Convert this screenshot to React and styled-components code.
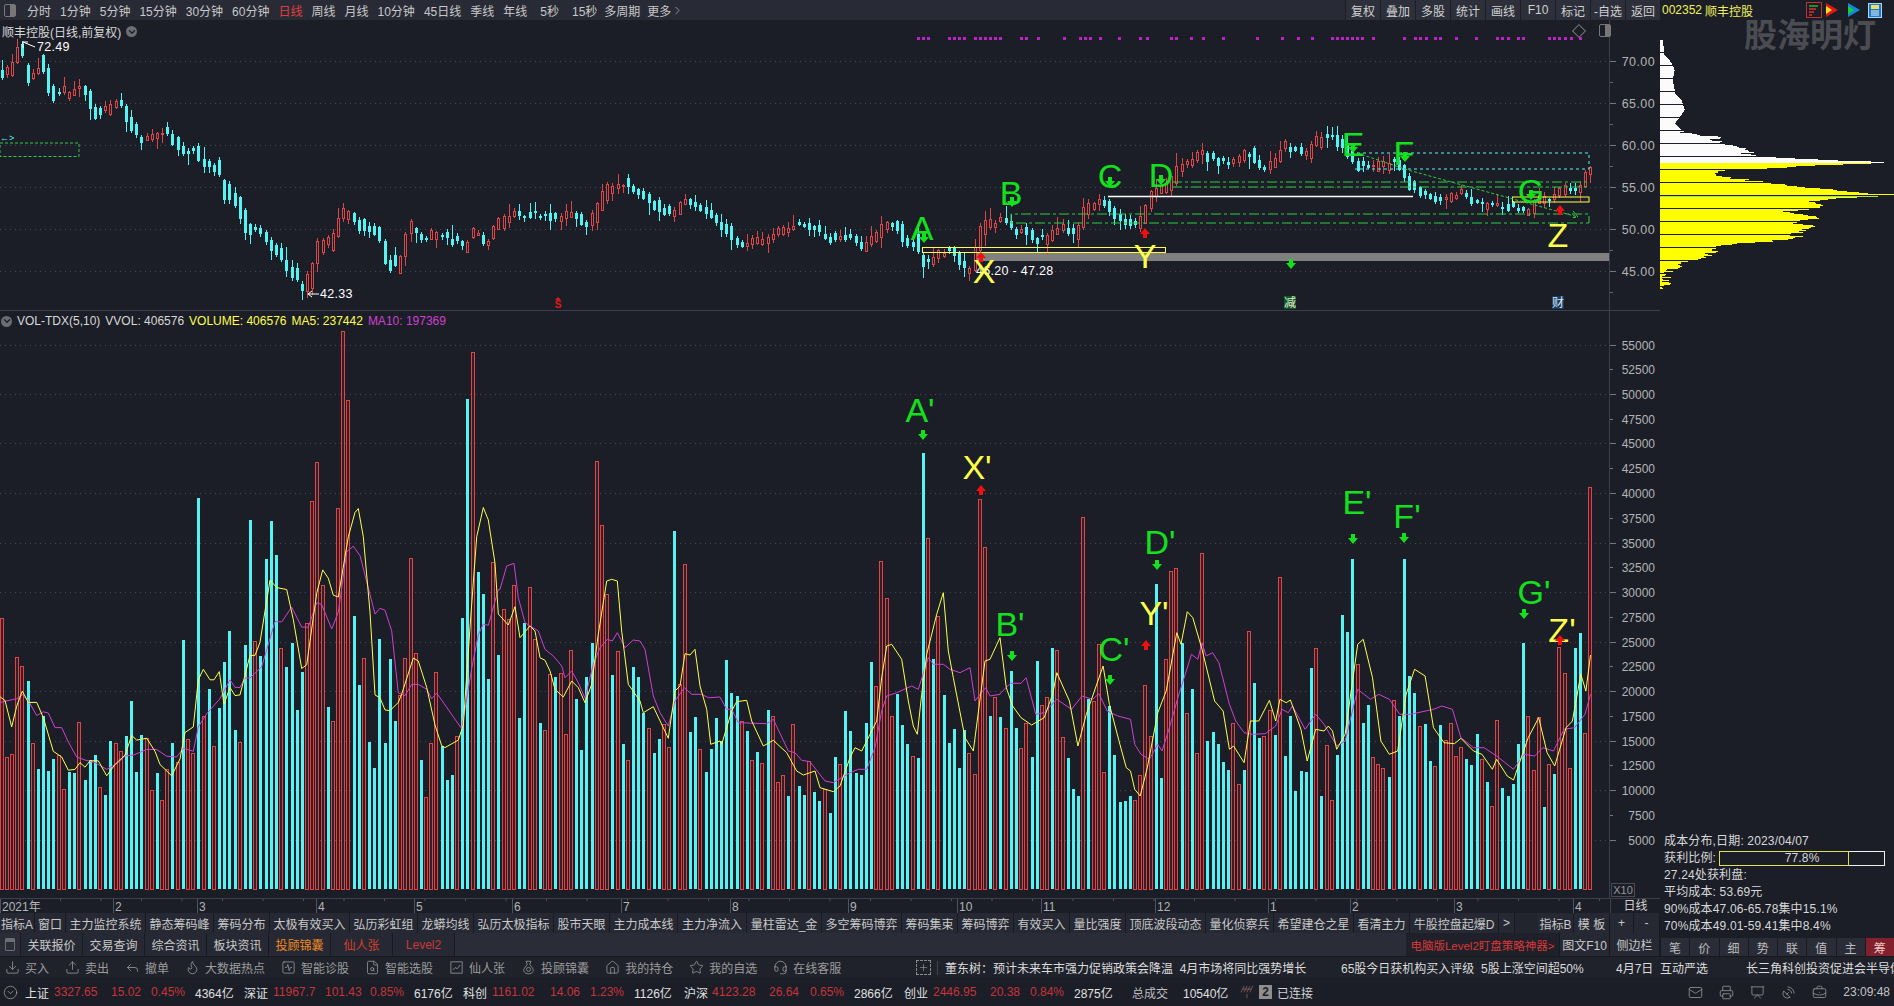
import React from "react";
import styled, { createGlobalStyle } from "styled-components";
import {
	Download,
	Upload,
	Reply,
	Flame,
	SquareActivity,
	FileSearch,
	Star,
	Headset,
	CircleChevronDown,
	Antenna,
	Mail,
	Printer,
	Presentation,
	SatelliteDish,
	BriefcaseBusiness,
	Plus,
	ChevronRight,
	ChevronDown,
	House,
} from "lucide-react";

const BG = "#1b1e27";
const BAR = "#282b36";
const CYAN = "#54f4f4";
const RED = "#dc4646";
const YELLOW = "#ffff4a";
const MAGENTA = "#d040d0";
const GREEN = "#14e01e";
const GRID = "#454852";
const LINE = "#3d404c";
const QUOTE = "#c5343a";

/* ---------- volume data, read off the chart ---------- */

const parseBars = (s, y0, scale) =>
	s
		.trim()
		.split(/\s+/)
		.map((t) => ({ up: t[0] === "r", top: y0 + Number(t.slice(1)) / scale }));

const volBars = [
	...parseBars(
		`r817 r1186 r1176 r918 r944 c982 r1149 c1217 c1076 c1223 c1191 r1180 r1270 c1225 c1228 r1093 c1245 c1192 c1180 r1266
		c1286 c1143 r1148 r1168 c1129 c1037 c1225 c1127 r1135 r1273 c1228 r1298 r1218 c1148 r1198 c875 r1136 r1175 c497 r1077
		c1005 r1157 c1055 c933 c851 c1114 r1145 c888 c555 r878 c917 c659 c559 c649 r896 c946 c882 c1060 c959 r830
		r506 r402 r727 c1052 r1090 r524 r53 r237 c811 c994 r923 c1145 c1215 c872 c1148 c925 c1090 r1020 r922 r655
		r910 c1193 r1290 r1148 r960 c1157 c1246 c1233 r1128 c816 c234 r110 c694 c752 c978 r667 c914`,
		310,
		2.657
	),
	...parseBars(
		`r625 r655 r553 c951 c666 r559 r715 c966 r988 r820 c828 r817 r1000 r748 c894 c1047 c828 c726 r181 r373
		r580 c822 r751 c1029 r1077 c798 c828 c935 r981 c1056 c1014 r970 r1039 c390 r850 r490 c993 c948 r1045 c1113
		c1044 c951 c1020 c777 c876 c885 r960 c990 r1078 c1053 r1087 c927 r946 r1144 r1122 c1185 r970 c1155 c1182 r1080
		c1173 c1200 r1165 c1236 c1068 r1090 c930 c990 c1115 c1122 c966 c783 r856 r481 r592 r945 c880 c972 c1030 r1066
		c1071 c156 r411 c773 r646 c882 c1026 c984 c1101 c988 r1057 r1120 r294 r438 c945 r888`,
		400,
		3
	),
	...parseBars(
		`c948 r982 c810 c982 r1042 r966 c1068 c780 r912 r888 c742 r748 r1008 c1072 c1164 c1185 r349 c895 r900 r730
		r1113 c915 c1062 c1203 c1200 c1185 r1197 r1122 r853 r1005 c549 c1132 r775 r511 r502 c725 r935 c865 r1057 r457
		c1020 c993 c1030 c1083 c1107 r967 r1150 c1107 r690 c846 c1010 r1005 r928 c1002 r529 c1065 c945 c1170 c1110 c1113
		c801 r740 c1185 r1033 r1197 c1062 c642 c693 c475 r790 c966 c912 r1068 r1090 r1102 c1128 r898 c945 c475 c825
		c876 r975 c969 c1080 r1095 c972 r1017 r966 r1065 r1038 c1074 c1092 c999 r1074 c1143 r1215 r957 c1161 c1185 c1149
		c1029 c726 r945 r1107 r948 c1218 r1090 c1119 r738 r816 r1101 c741 c696 r996 r258`,
		400,
		3
	),
];

const barX = (i) => 1.7 + 5.175 * i;

const toPoints = (pairs, ox, oy, sx, sy) => {
	const out = [];
	for (let i = 0; i < pairs.length; i += 2) out.push([ox + pairs[i] / sx, oy + pairs[i + 1] / sy]);
	return out;
};

const ma5 = [
	...toPoints(
		[0,1025,15,1035,35,1105,50,1050,67,1010,85,1040,110,1040,130,1080,160,1170,185,1185,205,1220,225,1218,240,1200,255,1212,270,1195,295,1195,320,1235,345,1205,375,1180,395,1128,410,1140,440,1135,465,1170,480,1205,515,1235,540,1190,555,1120,580,1105,595,980,610,952,630,980,642,980,658,958,672,1045,690,1000,705,1022,720,1020,750,915,765,915,780,880,810,715,830,735,860,740,880,820,905,950,920,940,950,750,968,688,985,710,1000,755,1015,760,1045,600,1065,535,1075,525,1090,600,1110,800,1125,1020,1140,1028,1155,1060,1170,1062,1195,1040,1205,1018,1240,922,1255,930,1280,1000,1305,1100,1325,1155,1335,1160,1375,1140,1390,1100,1410,840,1430,600,1450,522,1465,555,1485,670,1495,805],
		0, 310, 3, 2.657
	),
	...toPoints(
		[25,672,45,617,60,710,90,675,105,690,120,770,135,778,150,810,165,865,190,888,215,840,235,860,255,905,275,850,295,700,320,540,335,535,352,540,365,690,385,850,420,900,430,935,460,917,505,1012,525,870,540,855,555,758,570,762,585,745,600,855,620,925,632,1030,660,1020,665,1030,695,930,710,902,740,898,755,960,790,1035,820,1018,860,1055,890,1110,910,1122,945,1110,960,1160,1000,1172,1020,1155,1050,1070,1065,1040,1085,1050,1130,960,1145,830,1160,735,1175,730,1205,775,1225,900,1240,975,1252,1000,1265,880,1280,760,1310,640,1330,575,1345,750,1360,830,1395,1010,1420,1050,1455,780,1470,775,1500,710],
		500, 400, 3, 3
	),
	...toPoints(
		[15,860,30,915,50,950,75,972,105,950,125,880,135,815,165,900,185,1035,205,940,245,795,260,910,285,1030,300,1100,310,1110,320,1165,333,1185,350,1100,375,935,395,870,420,695,430,730,445,632,458,650,480,745,510,900,530,930,545,1045,555,1035,580,1085,595,960,615,960,640,898,655,960,665,895,680,905,690,897,715,985,730,1080,750,985,770,990,780,975,790,990,800,1045,820,1000,850,730,863,715,885,830,905,1020,925,1060,945,1050,965,880,985,805,1010,825,1030,980,1055,1025,1080,1028,1095,1012,1125,1050,1145,1060,1170,1105,1180,1075,1205,1125,1220,1137,1255,1010,1280,950,1300,1055,1318,1095,1345,980,1360,960,1380,820,1392,870,1403,762],
		1000, 400, 2.376, 3
	),
];

const ma10 = [
	...toPoints(
		[0,1040,50,1030,67,1020,85,1035,110,1075,130,1065,145,1068,165,1107,185,1107,205,1145,230,1185,255,1193,285,1200,320,1218,355,1200,375,1182,400,1180,440,1165,470,1165,500,1183,530,1185,550,1162,580,1170,595,1105,620,1070,660,1030,690,980,705,1000,720,1000,735,975,750,975,785,945,825,825,845,826,875,787,905,840,925,840,950,775,965,780,995,845,1015,800,1040,640,1060,625,1080,650,1125,805,1140,790,1155,795,1175,850,1195,1015,1215,1022,1235,992,1255,992,1280,1005,1295,1030,1310,1015,1385,1110,1415,950,1435,860,1450,832,1465,835,1495,740],
		0, 310, 3, 2.657
	),
	...toPoints(
		[0,565,20,495,42,487,55,590,75,665,115,690,135,745,160,765,185,795,195,830,215,810,235,845,255,892,280,790,300,740,322,715,337,720,352,695,375,740,400,717,420,720,435,745,460,885,480,935,505,975,525,900,553,860,575,880,605,880,625,890,660,888,680,925,695,925,715,965,800,968,820,955,865,1050,885,1055,905,1078,930,1082,975,1140,1000,1145,1050,1115,1075,1105,1100,1105,1125,1040,1145,930,1160,885,1190,875,1235,855,1255,865,1285,770,1300,790,1330,790,1350,805,1380,815,1410,800,1425,900,1440,880,1457,860,1470,885,1500,880],
		500, 400, 3, 3
	),
	...toPoints(
		[0,878,25,847,50,847,62,830,85,940,105,935,135,895,170,925,195,885,220,895,235,878,255,930,280,945,310,955,320,1030,335,1060,355,1075,375,1030,385,1050,400,990,425,880,455,760,470,775,480,725,490,765,505,755,520,785,545,910,560,960,580,995,600,1000,630,998,655,975,670,925,685,935,695,915,725,985,750,940,770,970,800,1035,820,1020,850,865,880,895,900,880,925,895,950,940,975,940,1030,925,1050,915,1075,925,1095,1010,1125,1040,1150,1040,1180,1065,1220,1105,1245,1060,1270,1065,1290,1040,1315,1050,1340,985,1365,980,1390,940,1403,880],
		1000, 400, 2.376, 3
	),
];

/* ---------- price data: traced mid line, candles scattered round it ---------- */

const priceTrace = [
	...toPoints(
		[0,130,20,130,30,70,45,65,50,130,60,130,75,100,85,155,100,205,115,185,130,190,145,175,160,205,170,250,190,240,215,225,235,280,250,320,270,315,295,300,310,335,330,375,345,360,365,400,390,420,400,480,415,500,430,530,445,610,460,600,480,640,500,680,520,720,540,770,555,740,570,640,590,640,610,560,630,560,650,590,675,610,695,700,715,700,730,600,750,620,790,610,830,650,850,600,870,640,890,580,920,550,950,550,975,555,1000,570,1020,550,1050,590,1065,550,1085,470,1115,460,1135,480,1165,520,1200,555,1220,510,1240,520,1270,560,1295,590,1315,640,1350,630,1375,625,1395,600,1420,590,1440,590,1465,610,1490,630,1510,620,1540,650],
		0, 30, 1.782, 3
	),
	...toPoints(
		[0,310,15,280,35,280,50,310,60,335,85,340,95,400,115,385,130,370,150,360,170,385,190,420,205,400,220,320,235,280,260,270,285,280,300,310,320,290,345,330,375,320,400,295,432,310,445,250,470,220,490,210,510,260,545,270,565,290,580,230,600,190,630,170,650,110,680,100,700,70,735,90,770,100,810,70,825,110,860,100,880,50,910,60,930,80,950,30,970,25,1000,30,1020,70,1040,100,1075,115,1110,100,1130,100,1150,155,1180,185,1225,205,1270,190,1300,215,1340,220,1380,230,1410,240,1440,205,1470,205,1500,165,1520,185,1547,130],
		880, 130, 2.178, 3
	),
];

const interp = (pts, x) => {
	if (x <= pts[0][0]) return pts[0][1];
	for (let i = 1; i < pts.length; i++) {
		if (x <= pts[i][0]) {
			const [x0, y0] = pts[i - 1];
			const [x1, y1] = pts[i];
			return y0 + ((y1 - y0) * (x - x0)) / (x1 - x0 || 1);
		}
	}
	return pts[pts.length - 1][1];
};

const rng = (seed) => () => {
	seed = (seed + 0x6d2b79f5) | 0;
	let t = Math.imul(seed ^ (seed >>> 15), 1 | seed);
	t = (t + Math.imul(t ^ (t >>> 7), 61 | t)) ^ t;
	return ((t ^ (t >>> 14)) >>> 0) / 4294967296;
};

const candles = (() => {
	const r = rng(2352);
	const list = [];
	for (let i = 0; i < 308; i++) {
		const x = Math.round(barX(i));
		const mid = interp(priceTrace, x) + (r() - 0.5) * 7;
		const slope = interp(priceTrace, x + 6) - interp(priceTrace, x - 6);
		const body = 1 + r() * r() * 9 + Math.abs(slope) * 0.6;
		const up = slope + (r() - 0.5) * 6 < 0;
		const y = mid - body / 2;
		list.push({
			x,
			y: Math.round(y),
			h: Math.max(1, Math.round(body)),
			hi: Math.round(y - r() * r() * 13 - 1),
			lo: Math.round(y + body + r() * r() * 13 + 1),
			up,
		});
	}
	return list;
})();

const purpleDots = [
	917, 922, 927, 948, 953, 958, 963, 974, 979, 984, 989, 994, 999, 1020, 1025, 1037, 1063, 1079, 1084, 1089, 1099, 1118,
	1139, 1146, 1170, 1175, 1190, 1202, 1222, 1256, 1281, 1297, 1311, 1331, 1336, 1341, 1346, 1351, 1356, 1361, 1372,
	1403, 1414, 1419, 1425, 1434, 1439, 1455, 1475, 1496, 1501, 1507, 1517, 1522, 1548, 1553, 1558, 1564, 1570, 1579,
];

/* ---------- chip distribution: [y, width] ---------- */

const chipWidths = toPoints(
	[10,28,10,40,12,75,25,85,35,100,44,120,38,150,46,190,65,210,74,240,60,260,45,280,65,300,85,310,165,320,170,335,200,345,275,355,260,370,320,380,405,385,565,392,675,397,650,400,500,405,410,410,345,415,190,420,160,430,195,440,260,450,330,460,420,470,520,480,620,490,690,493,690,498,540,505,440,515,490,525,480,535,370,545,460,555,485,565,395,575,460,590,430,600,400,610,425,625,320,635,190,645,180,655,150,670,130,680,110,690,75,700,35,720,15,730,15,750,18,765,2,775],
	0, 0, 1, 1
).map(([w, zy]) => [30 + zy / 3, w / 3]);

const chipRows = (() => {
	const r = rng(77);
	const rows = [];
	for (let y = 39; y < 289; y++) {
		if ((y - 39) % 13 === 0) continue;
		const base = interp(chipWidths, y + 0.5);
		const jitter = y > 130 ? (r() - 0.5) * 14 : 0;
		rows.push({ y, w: Math.max(2, base + jitter) });
	}
	return rows;
})();

/* ---------- text content ---------- */

const periods = [
	["分时", 9], ["1分钟", 9], ["5分钟", 9], ["15分钟", 9], ["30分钟", 9], ["60分钟", 9], ["日线", 9], ["周线", 9], ["月线", 9],
	["10分钟", 9], ["45日线", 9], ["季线", 9], ["年线", 13], ["5秒", 13], ["15秒", 7], ["多周期", 7],
];
const rightTools = ["复权", "叠加", "多股", "统计", "画线", "F10", "标记", "-自选", "返回"];

const indexTabs = [
	["指标A", 35], ["窗口", 31], ["主力监控系统", 80], ["静态筹码峰", 68], ["筹码分布", 56], ["太极有效买入", 80],
	["弘历彩虹组", 68], ["龙蟒均线", 56], ["弘历太极指标", 80], ["股市天眼", 56], ["主力成本线", 68], ["主力净流入", 69],
	["量柱雷达_金", 75], ["多空筹码博弈", 80], ["筹码集束", 56], ["筹码博弈", 56], ["有效买入", 56], ["量比强度", 56],
	["顶底波段动态", 80], ["量化侦察兵", 68], ["希望建仓之星", 80], ["看清主力", 56], ["牛股控盘起爆D", 89],
];

const infoTabs = [
	["关联报价", ""], ["交易查询", ""], ["综合资讯", ""], ["板块资讯", ""], ["投顾锦囊", "#f08a24"], ["仙人张", "#d8402a"], ["Level2", "#c83a3a"],
];

const ChartBox = (p) => (
	<svg width={15} height={15} viewBox="0 0 24 24" fill="none" stroke="currentColor" strokeWidth="1.3" {...p}>
		<rect x="3" y="3" width="18" height="18" />
		<path d="M6 16l4-4 3 2 5-6" />
	</svg>
);

const PouchIcon = (p) => (
	<svg width={15} height={15} viewBox="0 0 24 24" fill="none" stroke="currentColor" strokeWidth="1.3" {...p}>
		<path d="M8 2h8l-2 5 5 7c2 4-1 8-7 8s-9-4-7-8l5-7z" />
		<circle cx="12" cy="15" r="3.2" />
	</svg>
);

const actions = [
	[Download, "买入"], [Upload, "卖出"], [Reply, "撤单"], [Flame, "大数据热点"], [SquareActivity, "智能诊股"], [FileSearch, "智能选股"],
	[ChartBox, "仙人张"], [PouchIcon, "投顾锦囊"], [House, "我的持仓"], [Star, "我的自选"], [Headset, "在线客服"],
];

const news = [
	["董东树：预计未来车市强力促销政策会降温  4月市场将同比强势增长", 396],
	["65股今日获机构买入评级  5股上涨空间超50%", 275],
	["4月7日  互动严选", 130],
	["长三角科创投资促进会半导体", 148],
];

const quoteRow = [
	["上证", "w", 29], ["3327.65", "r", 57], ["15.02", "r", 40], ["0.45%", "r", 44], ["4364亿", "w", 49],
	["深证", "w", 29], ["11967.7", "r", 52], ["101.43", "r", 45], ["0.85%", "r", 44], ["6176亿", "w", 49],
	["科创", "w", 29], ["1161.02", "r", 58], ["14.06", "r", 40], ["1.23%", "r", 44], ["1126亿", "w", 50],
	["沪深", "w", 28], ["4123.28", "r", 57], ["26.64", "r", 41], ["0.65%", "r", 44], ["2866亿", "w", 50],
	["创业", "w", 29], ["2446.95", "r", 57], ["20.38", "r", 40], ["0.84%", "r", 44], ["2875亿", "w", 58],
	["总成交", "g", 51], ["10540亿", "w", 57],
];

const chipInfo = ["27.24处获利盘:", "平均成本: 53.69元", "90%成本47.06-65.78集中15.1%", "70%成本49.01-59.41集中8.4%"];
const sideTabs = ["笔", "价", "细", "势", "联", "值", "主", "筹"];

const months = [[2, "2021年"], [115, "2"], [199, "3"], [318, "4"], [416, "5"], [514, "6"], [623, "7"], [732, "8"], [850, "9"], [959, "10"], [1043, "11"], [1157, "12"], [1270, "1"], [1352, "2"], [1456, "3"], [1575, "4"]];

const priceY = (p) => 271 - (p - 45) * 8.38;
const volY = (v) => 888 - v * 0.0099;

const polyline = (pts) => pts.map(([x, y]) => `${x.toFixed(1)},${y.toFixed(1)}`).join(" ");

/* ---------- chart drawings ---------- */

const ArrowDown = ({ x, y, color = GREEN }) => (
	<path d={`M${x - 2} ${y - 5}h4v4h3l-5 6l-5 -6h3z`} fill={color} />
);
const ArrowUp = ({ x, y, color = "#f01010" }) => (
	<path d={`M${x} ${y - 5}l5 6h-3v4h-4v-4h-3z`} fill={color} />
);
const Big = ({ x, y, color = GREEN, children }) => (
	<text x={x} y={y} fill={color} fontSize="34" textAnchor="middle" fontFamily="Liberation Sans">
		{children}
	</text>
);

const PriceChart = () => (
	<svg width="1660" height="290" viewBox="0 20 1660 290" style={{ display: "block" }}>
		{[70, 65, 60, 55, 50, 45].map((p) => (
			<g key={p}>
				<line x1="0" x2="1609" y1={Math.round(priceY(p)) + 0.5} y2={Math.round(priceY(p)) + 0.5} stroke={GRID} strokeDasharray="1 4" />
				<line x1="1610" x2="1616" y1={Math.round(priceY(p)) + 0.5} y2={Math.round(priceY(p)) + 0.5} stroke="#777" />
				<line x1="1610" x2="1613" y1={Math.round(priceY(p - 2.5)) + 0.5} y2={Math.round(priceY(p - 2.5)) + 0.5} stroke="#666" />
				<text x="1655" y={priceY(p) + 4.5} fill="#b4b4b4" fontSize="12.5" textAnchor="end" letterSpacing="0.4">
					{p}.00
				</text>
			</g>
		))}
		<line x1="1609.5" x2="1609.5" y1="20" y2="310" stroke={LINE} />

		{purpleDots.map((x) => (
			<rect key={x} x={x} y="37" width="3" height="3" fill="#c020c8" />
		))}

		<rect x="0" y="143" width="79" height="13.5" fill="none" stroke="#2ecc40" strokeDasharray="3 2" />
		<text x="0" y="141" fill={CYAN} fontSize="9">
			←&gt;
		</text>

		<rect x="975" y="253" width="634" height="8" fill="#808080" />

		<g shapeRendering="crispEdges">
			{candles.map((c, i) => (
				<g key={i}>
					<line x1={c.x + 0.5} x2={c.x + 0.5} y1={c.hi} y2={c.lo} stroke={c.up ? RED : CYAN} />
					{c.up ? (
						<rect x={c.x - 0.5} y={c.y + 0.5} width="2" height={c.h} fill={BG} stroke={RED} />
					) : (
						<rect x={c.x - 1} y={c.y} width="3" height={c.h} fill={CYAN} />
					)}
				</g>
			))}
		</g>

		<rect x="922.5" y="247.5" width="243" height="5" fill="none" stroke={YELLOW} />
		<rect x="1512.5" y="197" width="76.5" height="5" fill="none" stroke={YELLOW} />
		<line x1="1108" x2="1413" y1="196.5" y2="196.5" stroke="#fff" strokeWidth="1.5" />

		<path d="M1011 223V214H1589V223Z" fill="none" stroke="#2ecc40" strokeDasharray="10 3 3 3" />
		<path d="M1172 182H1589M1172 187H1589" fill="none" stroke="#2ecc40" strokeDasharray="10 3 3 3" />
		<path d="M1357 153H1589V169H1355" fill="none" stroke={CYAN} strokeDasharray="3 3" />
		<path d="M1357 153L1408 170L1578 217M1573 211L1578 217L1571 218" fill="none" stroke="#2ecc40" strokeDasharray="3 2" />

		<text x="976" y="275" fill="#fff" fontSize="12.5" letterSpacing="0.3">
			46.20 - 47.28
		</text>
		<path d="M23 42L35 47M23 42v6M23 42h5" fill="none" stroke="#fff" />
		<text x="37" y="51" fill="#fff" fontSize="12.5" letterSpacing="0.3">
			72.49
		</text>
		<path d="M308 294H319M308 294l4-3M308 294l4 3" fill="none" stroke="#fff" />
		<text x="320" y="298" fill="#fff" fontSize="12.5" letterSpacing="0.3">
			42.33
		</text>

		<path d="M558 297l3 3h-6z" fill="#e01818" />
		<text x="558" y="308" fill="#e01818" fontSize="10" fontWeight="bold" textAnchor="middle">
			S
		</text>
		<rect x="1284" y="296" width="12" height="13" fill="#0b5a18" />
		<text x="1290" y="307" fill="#e8e8e8" fontSize="12" textAnchor="middle">
			减
		</text>
		<rect x="1552" y="296" width="12" height="13" fill="#123a66" />
		<text x="1558" y="307" fill="#e8e8e8" fontSize="12" textAnchor="middle">
			财
		</text>

		<Big x={922} y={240}>A</Big>
		<Big x={1011} y={205}>B</Big>
		<Big x={1110} y={188}>C</Big>
		<Big x={1161} y={187}>D</Big>
		<Big x={1353} y={156}>E</Big>
		<Big x={1404} y={165}>F</Big>
		<Big x={1531} y={203}>G</Big>
		<Big x={984} y={283} color={YELLOW}>X</Big>
		<Big x={1145} y={268} color={YELLOW}>Y</Big>
		<Big x={1558} y={247} color={YELLOW}>Z</Big>

		{[[924, 238], [1012, 202], [1110, 182], [1161, 180], [1353, 148], [1405, 157], [1531, 195], [1291, 264]].map(([x, y]) => (
			<ArrowDown key={x} x={x} y={y} />
		))}
		<ArrowUp x={981} y={257} />
		<ArrowUp x={1145} y={233} />
		<ArrowUp x={1560} y={210} />
	</svg>
);

const VolumeChart = () => {
	const ticks = [];
	for (let v = 5000; v <= 55000; v += 2500) ticks.push(v);
	return (
		<svg width="1660" height="588" viewBox="0 310 1660 588" style={{ display: "block" }}>
			{ticks.map((v) => {
				const y = Math.round(volY(v)) + 0.5;
				const major = v % 5000 === 0;
				return (
					<g key={v}>
						{major && <line x1="0" x2="1609" y1={y} y2={y} stroke={GRID} strokeDasharray="1 4" />}
						<line x1="1610" x2={major ? 1616 : 1613} y1={y} y2={y} stroke="#777" />
						<text x="1655" y={y + 4} fill="#b4b4b4" fontSize="12" textAnchor="end">
							{v}
						</text>
					</g>
				);
			})}
			<line x1="1609.5" x2="1609.5" y1="310" y2="898" stroke={LINE} />

			<g shapeRendering="crispEdges">
				{volBars.map((b, i) => {
					const x = Math.round(barX(i));
					return b.up ? (
						<rect key={i} x={x - 1.5} y={Math.round(b.top) + 0.5} width="3" height={887.5 - Math.round(b.top)} fill="#3a1d24" stroke={RED} />
					) : (
						<rect key={i} x={x - 1.5} y={Math.round(b.top)} width="3.5" height={888 - Math.round(b.top)} fill={CYAN} />
					);
				})}
			</g>

			<polyline points={polyline(ma10)} fill="none" stroke={MAGENTA} strokeWidth="1" />
			<polyline points={polyline(ma5)} fill="none" stroke={YELLOW} strokeWidth="1" />

			<Big x={920} y={421}>A'</Big>
			<Big x={977} y={478} color={YELLOW}>X'</Big>
			<Big x={1010} y={635}>B'</Big>
			<Big x={1114} y={660}>C'</Big>
			<Big x={1154} y={624} color={YELLOW}>Y'</Big>
			<Big x={1160} y={553}>D'</Big>
			<Big x={1357} y={513}>E'</Big>
			<Big x={1407} y={527}>F'</Big>
			<Big x={1534} y={603}>G'</Big>
			<Big x={1562} y={641} color={YELLOW}>Z'</Big>

			{[[923, 434], [1012, 655], [1110, 679], [1157, 564], [1353, 538], [1404, 537], [1524, 613]].map(([x, y]) => (
				<ArrowDown key={x} x={x} y={y} />
			))}
			<ArrowUp x={981} y={489} />
			<ArrowUp x={1146} y={644} />
			<ArrowUp x={1560} y={639} />
		</svg>
	);
};

const TimeAxis = () => (
	<svg width="1610" height="14" viewBox="0 0 1610 14" style={{ display: "block" }}>
		{months.map(([x, label], i) => (
			<g key={i}>
				<line x1={x - 1.5} x2={x - 1.5} y1="0" y2="14" stroke="#50535e" />
				<text x={x} y="12" fill="#b4b4b4" fontSize="12">
					{label}
				</text>
			</g>
		))}
		{Array.from({ length: 40 }, (_, i) => (
			<line key={i} x1={20 + i * 40.5} x2={20 + i * 40.5} y1="0" y2="2" stroke="#50535e" />
		))}
	</svg>
);

const ChipChart = () => (
	<svg width="234" height="290" viewBox="1660 20 234 290" style={{ display: "block" }} shapeRendering="crispEdges">
		{chipRows.map(({ y, w }) => (
			<rect key={y} x="1660" y={y} width={w} height="1" fill={y === 196 ? "#a4e070" : y < 163 ? "#fbfbfb" : "#ffff00"} />
		))}
	</svg>
);

/* ---------- layout ---------- */

const GlobalStyle = createGlobalStyle`
	html, body {
		margin: 0;
		padding: 0;
		background: ${BG};
		overflow: hidden;
	}
	svg text {
		font-family: "Liberation Sans", "Noto Sans CJK SC", sans-serif;
	}
`;

const Page = styled.div`
	width: 1894px;
	height: 1006px;
	display: flex;
	flex-direction: column;
	background: ${BG};
	color: #d2d2d2;
	font-family: "Liberation Sans", "Noto Sans CJK SC", sans-serif;
	font-size: 12px;
	overflow: hidden;
`;

const Upper = styled.div`
	display: flex;
	height: 956px;
`;

const MainColumn = styled.div`
	width: 1660px;
	display: flex;
	flex-direction: column;
`;

const Toolbar = styled.div`
	height: 20px;
	display: flex;
	align-items: center;
	background: ${BAR};
	flex: none;
`;

const PanelToggle = styled.span`
	width: 10px;
	height: 11px;
	margin: 0 11px 0 4px;
	border: 1px solid #777;
	border-radius: 2px;
	background: linear-gradient(to right, transparent 50%, #777 50%);
`;

const Period = styled.span`
	margin-right: ${(p) => p.$gap}px;
	color: ${(p) => (p.$active ? "#e23c3c" : "#c8c8c8")};
	white-space: nowrap;
`;

const MoreLink = styled.span`
	display: flex;
	align-items: center;
	color: #c8c8c8;
`;

const ToolGroup = styled.div`
	margin-left: auto;
	display: flex;
	height: 100%;
`;

const ToolButton = styled.span`
	width: 35px;
	display: flex;
	align-items: center;
	justify-content: center;
	border-left: 1px solid #1b1e27;
	background: #2d303b;
	color: #d0d0d0;
	box-sizing: border-box;
	white-space: nowrap;
`;

const Pane = styled.div`
	position: relative;
	height: ${(p) => p.$h}px;
	flex: none;
	border-top: ${(p) => (p.$rule ? `1px solid ${LINE}` : "none")};
	box-sizing: border-box;
`;

const Legend = styled.div`
	position: absolute;
	top: ${(p) => p.$top}px;
	left: ${(p) => p.$left || 2}px;
	display: flex;
	align-items: center;
	gap: ${(p) => p.$gap || 5}px;
	white-space: nowrap;
`;

const LegendText = styled.span`
	color: ${(p) => p.$color || "#d8d8d8"};
`;

const RoundChevron = styled.span`
	width: 11px;
	height: 11px;
	border-radius: 50%;
	background: #6b6d74;
	color: #1b1e27;
	display: flex;
	align-items: center;
	justify-content: center;
`;

const CornerTools = styled.div`
	position: absolute;
	top: 4px;
	left: 1574px;
	display: flex;
	align-items: center;
	gap: 11px;
`;

const Diamond = styled.span`
	width: 8px;
	height: 8px;
	border: 1px solid #777;
	transform: rotate(45deg);
`;

const ScaleBox = styled.span`
	position: absolute;
	left: 1611px;
	bottom: 1px;
	width: 24px;
	height: 14px;
	border: 1px solid #474a55;
	box-sizing: border-box;
	color: #999;
	font-size: 11px;
	line-height: 12px;
	text-align: center;
`;

const TimeRow = styled.div`
	height: 15px;
	display: flex;
	border-top: 1px solid ${LINE};
	box-sizing: border-box;
	flex: none;
`;

const TimeLabel = styled.span`
	flex: 1;
	text-align: center;
	line-height: 14px;
	border-left: 1px solid ${LINE};
`;

const TabRow = styled.div`
	height: ${(p) => p.$h}px;
	display: flex;
	background: ${(p) => p.$bg || "#22252e"};
	flex: none;
`;

const Tab = styled.span`
	width: ${(p) => p.$w}px;
	flex: none;
	display: flex;
	align-items: center;
	justify-content: center;
	box-sizing: border-box;
	border-right: 1px solid #171a21;
	background: ${(p) => p.$bg || "#262933"};
	color: ${(p) => p.$color || "#c8c8c8"};
	white-space: nowrap;
	overflow: hidden;
`;

const TabFill = styled.span`
	flex: 1;
`;

const PromoTab = styled(Tab)`
	background: #1f2029;
	font-size: 11.5px;
`;

const IconCell = styled.span`
	width: 20px;
	flex: none;
	display: flex;
	align-items: center;
	justify-content: center;
	border-right: 1px solid #171a21;
`;

const TinyPanel = styled.span`
	width: 8px;
	height: 11px;
	border: 1px solid #6c6e74;
	border-radius: 1px;
	background: linear-gradient(to bottom, #6c6e74 30%, transparent 30%);
`;

const ChipPanel = styled.aside`
	position: relative;
	flex: 1;
	display: flex;
	flex-direction: column;
`;

const ChipHeader = styled.div`
	height: 20px;
	display: flex;
	align-items: center;
	padding-left: 2px;
	gap: 3px;
	color: #f0f05c;
	flex: none;
`;

const HeaderIcons = styled.div`
	margin-left: 50px;
	display: flex;
	align-items: center;
	gap: 4px;
`;

const Watermark = styled.div`
	position: absolute;
	top: 11px;
	left: 84px;
	font-family: "Noto Sans CJK SC", sans-serif;
	font-size: 33px;
	font-weight: 700;
	line-height: 44px;
	color: #4b4c52;
	white-space: nowrap;
`;

const ChipInfo = styled.div`
	margin-top: auto;
	padding: 0 0 3px 4px;
	display: flex;
	flex-direction: column;
	color: #d8d8d8;
`;

const InfoRow = styled.div`
	height: 17px;
	line-height: 17px;
	display: flex;
	align-items: center;
	white-space: nowrap;
	letter-spacing: 0.15px;
`;

const ProfitBar = styled.div`
	position: relative;
	margin-left: 3px;
	width: 166px;
	height: 15px;
	border: 1px solid #f0f0f0;
	box-sizing: border-box;
	text-align: center;
	line-height: 13px;
`;

const ProfitFill = styled.div`
	position: absolute;
	left: -1px;
	top: -1px;
	bottom: -1px;
	border: 1px solid #e0e050;
`;

const SideTabs = styled.div`
	height: 18px;
	display: flex;
	flex: none;
`;

const SideTab = styled.span`
	flex: 1;
	display: flex;
	align-items: center;
	justify-content: center;
	background: ${(p) => (p.$active ? "#82202e" : "#2a2d38")};
	border-left: 1px solid #171a21;
	color: ${(p) => (p.$active ? "#f0c8c8" : "#bcbcbc")};
`;

const ActionBar = styled.div`
	height: 22px;
	display: flex;
	align-items: center;
	padding-left: 5px;
	background: #1f222b;
	border-top: 1px solid #15171d;
	box-sizing: border-box;
	white-space: nowrap;
	overflow: hidden;
	flex: none;
`;

const Actions = styled.div`
	width: 911px;
	flex: none;
	display: flex;
	gap: 16px;
`;

const Action = styled.span`
	display: flex;
	align-items: center;
	gap: 5px;
	color: #9c9c9c;
`;

const AddBox = styled.span`
	width: 15px;
	height: 15px;
	flex: none;
	display: flex;
	align-items: center;
	justify-content: center;
	border: 1px dashed #8a8a8a;
	box-sizing: border-box;
	color: #aaa;
`;

const Divider = styled.span`
	width: 1px;
	height: 14px;
	margin: 0 7px 0 6px;
	background: #41444f;
	flex: none;
`;

const NewsItem = styled.span`
	width: ${(p) => p.$w}px;
	flex: none;
	color: #dcdcdc;
	white-space: pre;
	overflow: hidden;
`;

const StatusBar = styled.div`
	flex: 1;
	display: flex;
	align-items: center;
	padding-left: 3px;
	white-space: nowrap;
`;

const StatusIcon = styled.span`
	width: 22px;
	flex: none;
	display: flex;
	color: #9a9a9a;
`;

const Quote = styled.span`
	width: ${(p) => p.$w}px;
	flex: none;
	color: ${(p) => ({ r: QUOTE, w: "#e0e0e0", g: "#bcbcbc" }[p.$tone])};
`;

const LinkIcon = styled.span`
	width: 19px;
	flex: none;
	display: flex;
	color: #8c6a66;
`;

const LinkBadge = styled.span`
	width: 13px;
	height: 14px;
	margin-right: 5px;
	flex: none;
	background: #8e8e8e;
	color: #1b1e27;
	font-weight: bold;
	text-align: center;
	line-height: 14px;
`;

const Tray = styled.div`
	margin-left: auto;
	display: flex;
	align-items: center;
	gap: 16px;
	padding-right: 4px;
	color: #9a9a9a;
`;

const Clock = styled.span`
	color: #c4c4c4;
	margin-left: 0;
`;

const App = () => {
	const iconProps = { size: 15, strokeWidth: 1.25 };
	return (
		<Page>
			<GlobalStyle />
			<Upper>
				<MainColumn>
					<Toolbar>
						<PanelToggle />
						{periods.map(([p, gap]) => (
							<Period key={p} $active={p === "日线"} $gap={gap}>
								{p}
							</Period>
						))}
						<MoreLink>
							更多
							<ChevronRight size={13} strokeWidth={1.2} />
						</MoreLink>
						<ToolGroup>
							{rightTools.map((t) => (
								<ToolButton key={t}>{t}</ToolButton>
							))}
						</ToolGroup>
					</Toolbar>

					<Pane $h={290}>
						<PriceChart />
						<Legend $top={3}>
							<LegendText>顺丰控股(日线,前复权)</LegendText>
							<RoundChevron>
								<ChevronDown size={10} strokeWidth={3} />
							</RoundChevron>
						</Legend>
						<CornerTools>
							<Diamond />
							<PanelToggle />
						</CornerTools>
					</Pane>

					<Pane $h={588} $rule>
						<VolumeChart />
						<Legend $top={3} $left={1}>
							<RoundChevron>
								<ChevronDown size={10} strokeWidth={3} />
							</RoundChevron>
							<LegendText>VOL-TDX(5,10)</LegendText>
							<LegendText>VVOL: 406576</LegendText>
							<LegendText $color={YELLOW}>VOLUME: 406576</LegendText>
							<LegendText $color={YELLOW}>MA5: 237442</LegendText>
							<LegendText $color={MAGENTA}>MA10: 197369</LegendText>
						</Legend>
						<ScaleBox>X10</ScaleBox>
					</Pane>

					<TimeRow>
						<TimeAxis />
						<TimeLabel>日线</TimeLabel>
					</TimeRow>

					<TabRow $h={20}>
						{indexTabs.map(([t, w]) => (
							<Tab key={t} $w={w}>
								{t}
							</Tab>
						))}
						<Tab $w={16}>&gt;</Tab>
						<TabFill />
						<Tab $w={36}>指标B</Tab>
						<Tab $w={36}>模 板</Tab>
						<Tab $w={24}>+</Tab>
						<Tab $w={26}>-</Tab>
					</TabRow>

					<TabRow $h={23} $bg="#2a2d38">
						<IconCell>
							<TinyPanel />
						</IconCell>
						{infoTabs.map(([t, color]) => (
							<Tab key={t} $w={62} $color={color}>
								{t}
							</Tab>
						))}
						<TabFill />
						<PromoTab $w={154} $color="#d83838">
							电脑版Level2盯盘策略神器&gt;
						</PromoTab>
						<Tab $w={50}>图文F10</Tab>
						<Tab $w={50}>侧边栏</Tab>
					</TabRow>
				</MainColumn>

				<ChipPanel>
					<ChipHeader>
						<span>002352</span>
						<span>顺丰控股</span>
						<HeaderIcons>
							<svg width="16" height="16" viewBox="0 0 16 16">
								<rect x="0.5" y="0.5" width="15" height="15" fill="none" stroke="#c03030" />
								<path d="M3 4h9" stroke="#20c030" strokeWidth="1.4" />
								<path d="M3 7h7M3 10h5M3 13h3" stroke="#e03030" strokeWidth="1.4" />
							</svg>
							<svg width="12" height="14" viewBox="0 0 12 14">
								<path d="M0 0l12 7L0 14z" fill="#e01818" />
								<path d="M0 3l6 4l-6 4z" fill="#f0e020" />
							</svg>
							<svg width="14" height="14" viewBox="0 0 12 14" style={{ marginLeft: 5 }}>
								<path d="M0 0l12 7L0 14z" fill="#1088e0" />
								<path d="M0 3l6 4l-6 4z" fill="#18d028" />
							</svg>
							<svg width="14" height="15" viewBox="0 0 14 15" style={{ marginLeft: 3 }}>
								<rect x="0.5" y="0.5" width="13" height="14" fill="#2078c8" stroke="#a8d8f0" />
								<rect x="3" y="2" width="8" height="4" fill="#f0e060" />
								<path d="M3 8h8M3 10h8M3 12h8" stroke="#e8f0f8" />
							</svg>
						</HeaderIcons>
					</ChipHeader>
					<ChipChart />
					<Watermark>股海明灯</Watermark>

					<ChipInfo>
						<InfoRow>成本分布,日期: 2023/04/07</InfoRow>
						<InfoRow>
							获利比例:
							<ProfitBar>
								<ProfitFill style={{ width: "77.8%" }} />
								77.8%
							</ProfitBar>
						</InfoRow>
						{chipInfo.map((t) => (
							<InfoRow key={t}>{t}</InfoRow>
						))}
					</ChipInfo>

					<SideTabs>
						{sideTabs.map((t) => (
							<SideTab key={t} $active={t === "筹"}>
								{t}
							</SideTab>
						))}
					</SideTabs>
				</ChipPanel>
			</Upper>

			<ActionBar>
				<Actions>
					{actions.map(([Icon, label]) => (
						<Action key={label}>
							<Icon {...iconProps} />
							{label}
						</Action>
					))}
				</Actions>
				<AddBox>
					<Plus size={11} strokeWidth={1.2} />
				</AddBox>
				<Divider />
				{news.map(([t, w]) => (
					<NewsItem key={t} $w={w}>
						{t}
					</NewsItem>
				))}
			</ActionBar>

			<StatusBar>
				<StatusIcon>
					<CircleChevronDown {...iconProps} />
				</StatusIcon>
				{quoteRow.map(([t, tone, w]) => (
					<Quote key={t} $tone={tone} $w={w}>
						{t}
					</Quote>
				))}
				<LinkIcon>
					<Antenna size={14} strokeWidth={1.25} />
				</LinkIcon>
				<LinkBadge>2</LinkBadge>
				<span>已连接</span>
				<Tray>
					<Mail {...iconProps} />
					<Printer {...iconProps} />
					<Presentation {...iconProps} />
					<SatelliteDish {...iconProps} />
					<BriefcaseBusiness {...iconProps} />
					<Clock>23:09:48</Clock>
				</Tray>
			</StatusBar>
		</Page>
	);
};

export default App;
